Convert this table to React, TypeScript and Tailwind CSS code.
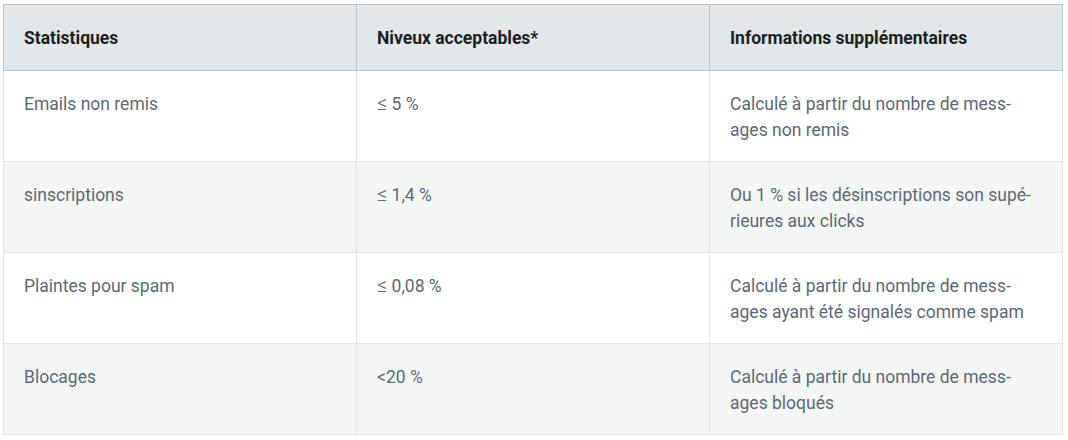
const Le = () => <span className="text-[20px] font-light leading-[0]">≤</span>;

const rows: { stat: string; level: React.ReactNode; info: React.ReactNode }[] = [
  {
    stat: 'Emails non remis',
    level: (
      <>
        <Le /> 5 %
      </>
    ),
    info: (
      <>
        Calculé à partir du nombre de mess-
        <br />
        ages non remis
      </>
    ),
  },
  {
    stat: 'sinscriptions',
    level: (
      <>
        <Le /> 1,4 %
      </>
    ),
    info: (
      <>
        Ou 1 % si les désinscriptions son supé-
        <br />
        rieures aux clicks
      </>
    ),
  },
  {
    stat: 'Plaintes pour spam',
    level: (
      <>
        <Le /> 0,08 %
      </>
    ),
    info: (
      <>
        Calculé à partir du nombre de mess-
        <br />
        ages ayant été signalés comme spam
      </>
    ),
  },
  {
    stat: 'Blocages',
    level: '<20 %',
    info: (
      <>
        Calculé à partir du nombre de mess-
        <br />
        ages bloqués
      </>
    ),
  },
];

export default function App() {
  return (
    <div className="min-h-screen bg-white pl-[3px] pt-[4px] font-['Roboto',sans-serif]">
      <table className="w-[1060px] table-fixed border-collapse text-left text-[17.5px] leading-[26px]">
        <thead>
          <tr className="bg-[#e3e7ea]">
            {['Statistiques', 'Niveux acceptables*', 'Informations supplémentaires'].map((h) => (
              <th
                key={h}
                className="h-[66px] border border-[#bcc4ca] px-5 align-middle font-bold text-[#1c1f22]"
              >
                {h}
              </th>
            ))}
          </tr>
        </thead>
        <tbody>
          {rows.map((r, i) => (
            <tr key={r.stat} className={i % 2 === 1 ? 'bg-[#f4f6f6]' : 'bg-white'}>
              <td className="h-[90px] border border-[#e2e6e8] px-5 pb-[18px] pt-5 align-top text-[#5d6974]">
                {r.stat}
              </td>
              <td className="border border-[#e2e6e8] px-5 pb-[18px] pt-5 align-top text-[#5d6974]">
                {r.level}
              </td>
              <td className="border border-[#e2e6e8] px-5 pb-[18px] pt-5 align-top text-[#5d6974]">
                {r.info}
              </td>
            </tr>
          ))}
        </tbody>
      </table>
    </div>
  );
}
